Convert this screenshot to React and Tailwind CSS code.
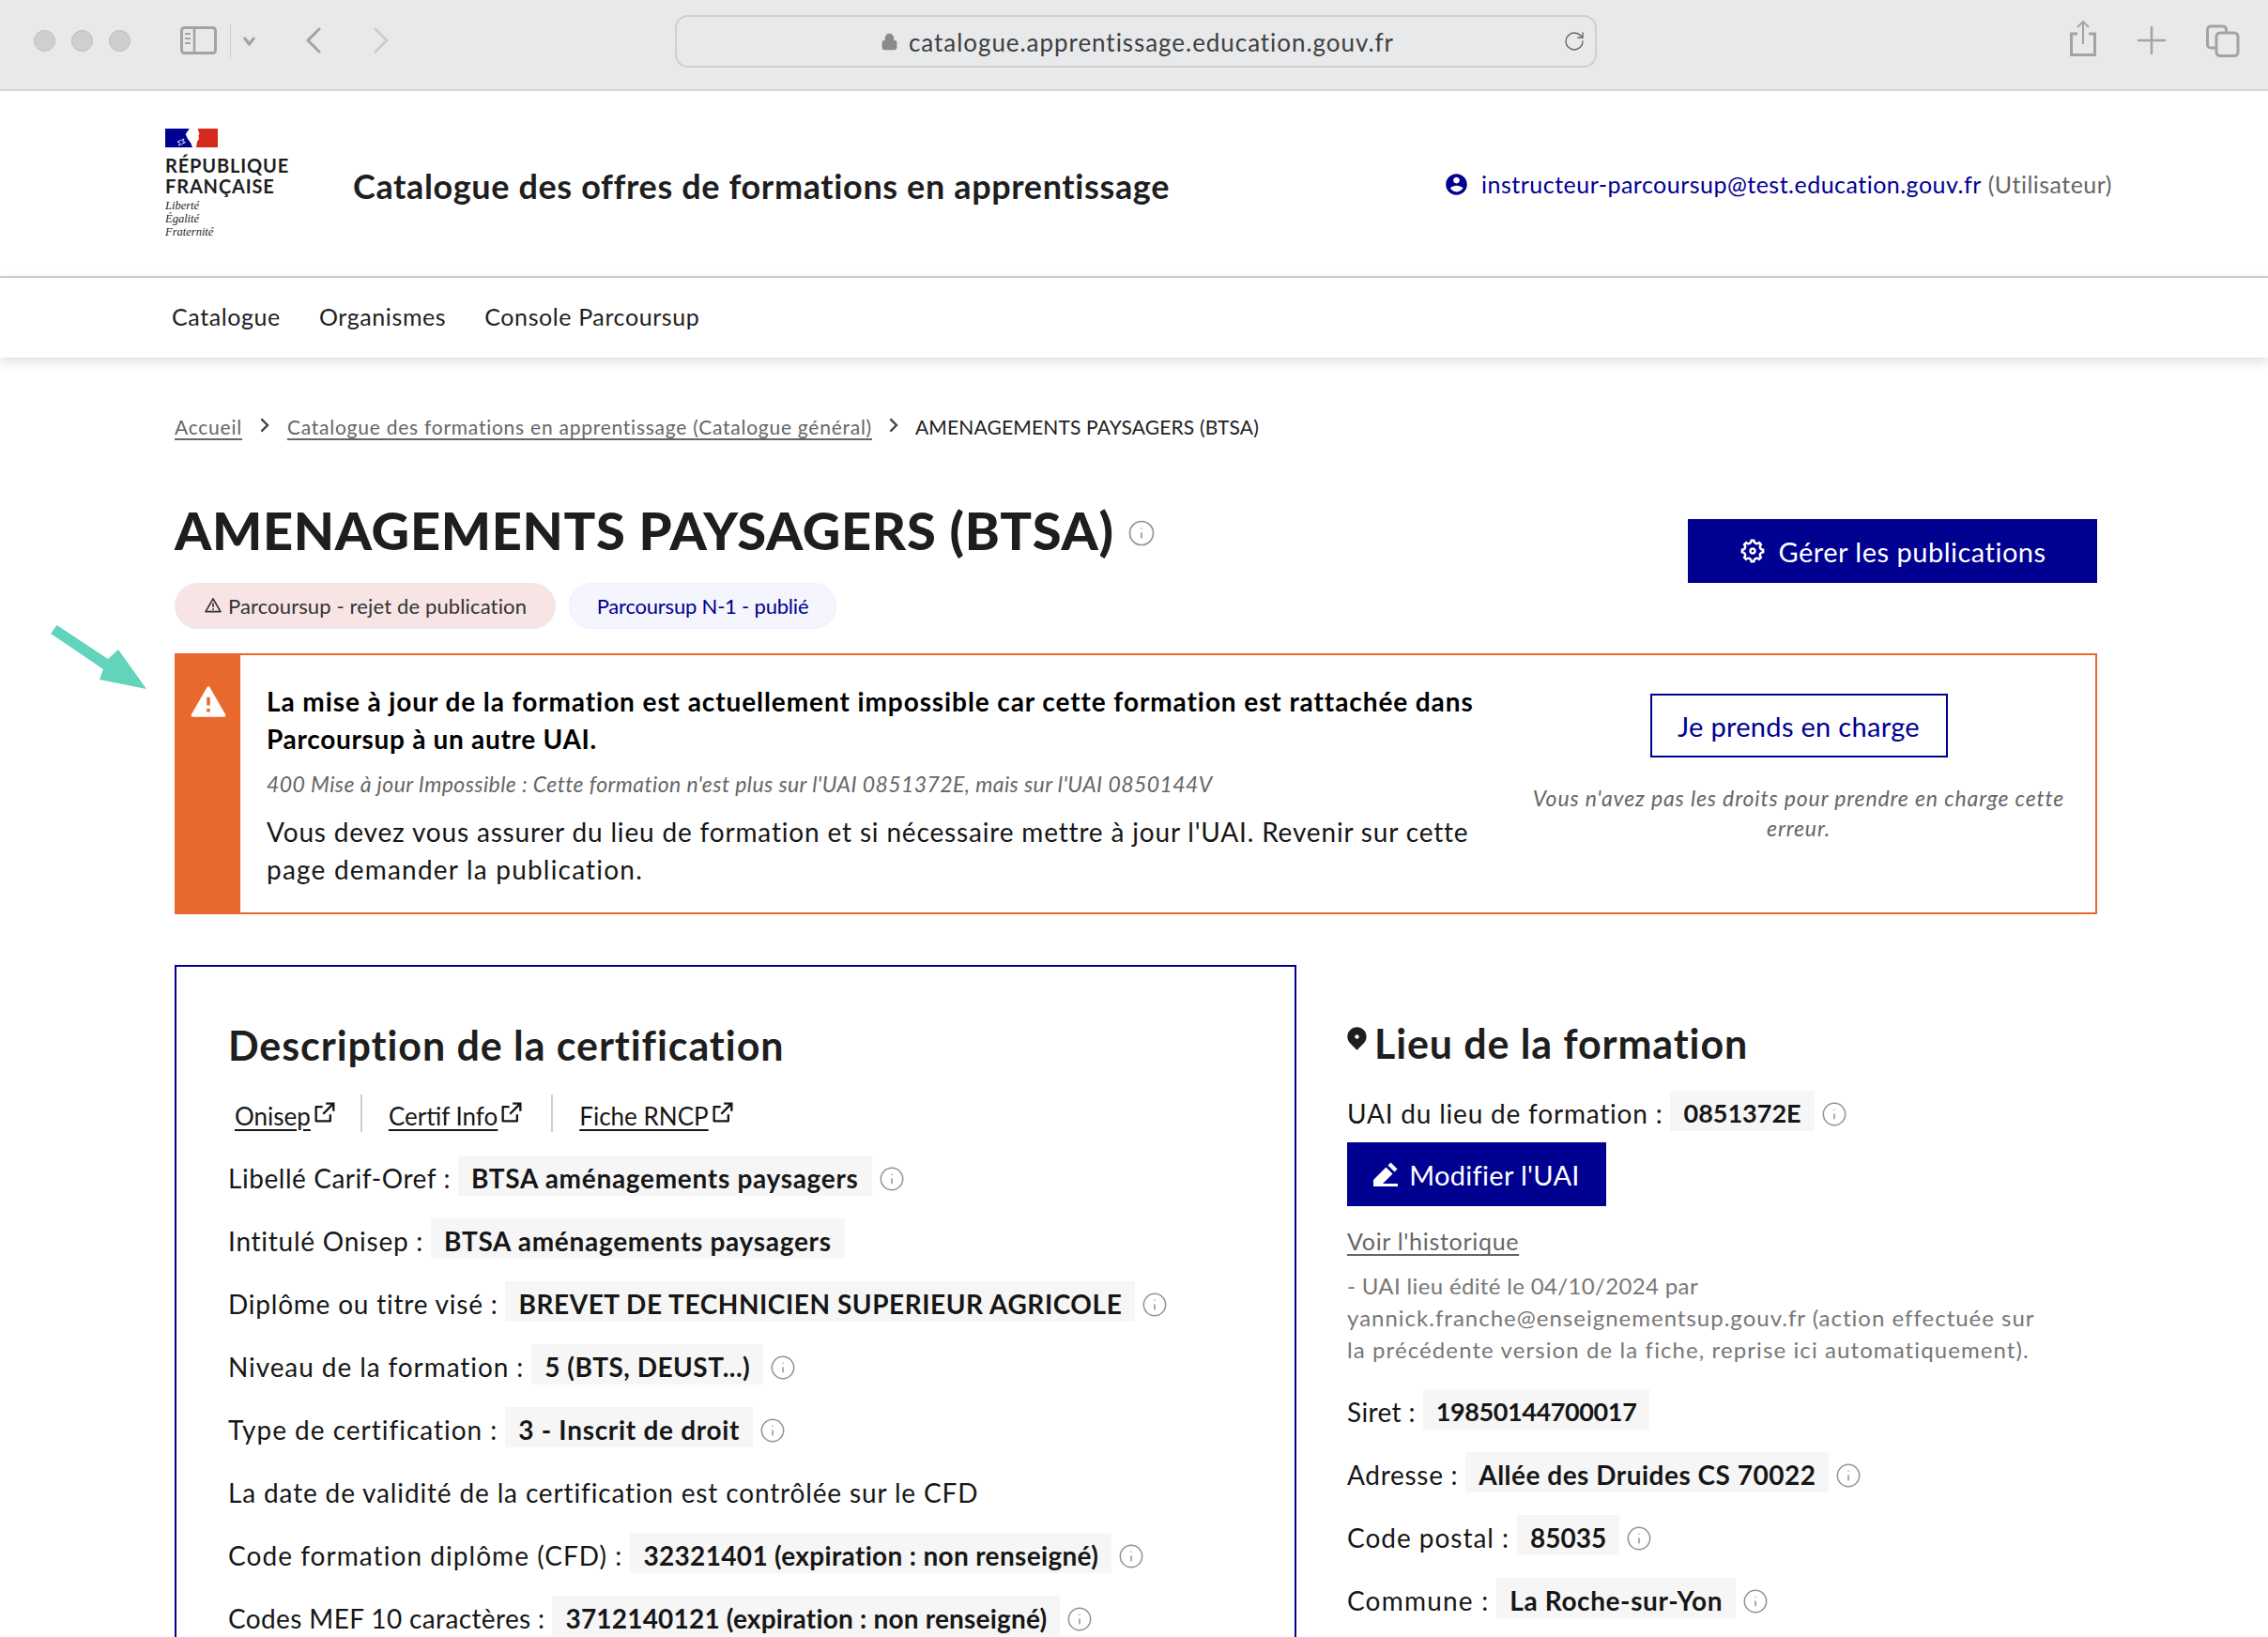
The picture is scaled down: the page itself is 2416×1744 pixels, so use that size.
import { Info, Lock, Plus, RotateCw } from 'lucide-react'
import {
  RiAccountCircleFill,
  RiAlertFill,
  RiAlertLine,
  RiArrowRightSLine,
  RiExternalLinkLine,
  RiMapPin2Fill,
  RiSettings5Line,
} from 'react-icons/ri'

const CERTIF_ROWS = [
  { label: 'Libellé Carif-Oref :', labelClass: 'tracking-[0.55px]', value: 'BTSA aménagements paysagers', info: true },
  { label: 'Intitulé Onisep :', labelClass: 'tracking-[0.75px]', value: 'BTSA aménagements paysagers' },
  { label: 'Diplôme ou titre visé :', labelClass: 'tracking-[0.78px]', value: 'BREVET DE TECHNICIEN SUPERIEUR AGRICOLE', info: true, valueClass: 'tracking-[0.55px]' },
  { label: 'Niveau de la formation :', labelClass: 'tracking-[0.91px]', value: '5 (BTS, DEUST...)', info: true, valueClass: 'tracking-[0.5px]' },
  { label: 'Type de certification :', labelClass: 'tracking-[0.98px]', value: '3 - Inscrit de droit', info: true },
  { label: 'La date de validité de la certification est contrôlée sur le CFD' },
  { label: 'Code formation diplôme (CFD) :', labelClass: 'tracking-[1.05px]', value: '32321401 (expiration : non renseigné)', info: true, valueClass: 'tracking-[0.33px]' },
  { label: 'Codes MEF 10 caractères :', labelClass: 'tracking-[0.37px]', value: '3712140121 (expiration : non renseigné)', info: true, valueClass: 'tracking-[0.2px]' },
]

const LIEU_ROWS = [
  { label: 'Siret :', labelClass: 'tracking-[0.35px]', value: '19850144700017', valueClass: 'text-[27px] tracking-[-0.4px]' },
  { label: 'Adresse :', labelClass: 'tracking-[0.7px]', value: 'Allée des Druides CS 70022', info: true, valueClass: 'tracking-[0.5px]' },
  { label: 'Code postal :', labelClass: 'tracking-[0.97px]', value: '85035', info: true, valueClass: 'tracking-[0px]' },
  { label: 'Commune :', labelClass: 'tracking-[1.2px]', value: 'La Roche-sur-Yon', info: true, valueClass: 'tracking-[0.6px]' },
]

const LINKS = ['Onisep', 'Certif Info', 'Fiche RNCP']

function InfoIcon() {
  return <Info size={28} strokeWidth={1.3} className="ml-[7px] mt-[6px] shrink-0 text-[#929292]" />
}

function Row({ label, labelClass = 'tracking-[0.85px]', value, info, valueClass = 'tracking-[0.7px]' }) {
  return (
    <div className="mb-[24px] flex h-[43px] items-center whitespace-nowrap text-[28px] text-[#161616]">
      <span className={`pt-[5px] ${labelClass}`}>{label}</span>
      {value && (
        <span className={`ml-[8px] flex h-[43px] items-center bg-[#f6f6f6] px-[14px] pt-[5px] font-bold ${valueClass}`}>
          {value}
        </span>
      )}
      {info && <InfoIcon />}
    </div>
  )
}

function BrowserBar() {
  return (
    <div className="flex h-[97px] items-start border-b-2 border-[#d9d9d9] bg-[#e8e9eb] text-[#a3a3a3]">
      <div className="ml-[36px] mt-[32px] flex gap-[17px]">
        <span className="h-[23px] w-[23px] rounded-full border border-[#bcbcbc] bg-[#cfcfcf]" />
        <span className="h-[23px] w-[23px] rounded-full border border-[#bcbcbc] bg-[#cfcfcf]" />
        <span className="h-[23px] w-[23px] rounded-full border border-[#bcbcbc] bg-[#cfcfcf]" />
      </div>
      <svg className="ml-[53px] mt-[28px]" width="39" height="30" viewBox="0 0 39 30" fill="none" stroke="#a3a3a3">
        <rect x="1.500" y="1.500" width="36" height="27" rx="3" strokeWidth="3" />
        <path d="M15 2v26" strokeWidth="2.500" />
        <path d="M5 8h6M5 13h6M5 18h6" strokeWidth="2" />
      </svg>
      <span className="ml-[14px] mt-[26px] h-[36px] w-px bg-[#cfcfcf]" />
      <svg className="ml-[12px] mt-[38px]" width="15" height="12" viewBox="0 0 15 12" fill="none" stroke="#a3a3a3" strokeWidth="3">
        <path d="M2 2l5.500 7L13 2" />
      </svg>
      <svg className="ml-[52px] mt-[29px]" width="18" height="28" viewBox="0 0 18 28" fill="none" stroke="#a3a3a3" strokeWidth="3" strokeLinecap="round">
        <path d="M15 2L3 14l12 12" />
      </svg>
      <svg className="ml-[54px] mt-[29px]" width="18" height="28" viewBox="0 0 18 28" fill="none" stroke="#cdcdcd" strokeWidth="3" strokeLinecap="round">
        <path d="M3 2l12 12L3 26" />
      </svg>
      <div className="ml-[304px] mt-[16px] flex h-[56px] w-[982px] items-center rounded-[14px] border-2 border-[#cfcfcf] pl-[217px] pr-[10px]">
        <Lock size={19} fill="#8a8a8a" strokeWidth={2} className="text-[#8a8a8a]" />
        <span className="ml-[11px] pt-[2px] text-[26px] tracking-[0.95px] text-[#3f3f3f]">catalogue.apprentissage.education.gouv.fr</span>
        <RotateCw size={24} strokeWidth={1.4} className="ml-auto text-[#666666]" />
      </div>
      <svg className="ml-[503px] mt-[22px]" width="30" height="39" viewBox="0 0 30 39" fill="none" stroke="#a3a3a3">
        <path d="M9 14H2.500v22.500h25V14H21" strokeWidth="3" />
        <path d="M15 1v24M9 7l6-6 6 6" strokeWidth="2" />
      </svg>
      <Plus size={48} strokeWidth={1.25} className="ml-[34px] mt-[19px]" />
      <svg className="ml-[34px] mt-[26px]" width="36" height="35" viewBox="0 0 36 35" fill="none" stroke="#a3a3a3" strokeWidth="3">
        <rect x="11" y="9" width="23" height="24.500" rx="4" />
        <path d="M11 25H5a3.500 3.500 0 0 1-3.500-3.500v-16A3.500 3.500 0 0 1 5 2h13a3.500 3.500 0 0 1 3.500 3.500V9" />
      </svg>
    </div>
  )
}

function Logo() {
  return (
    <div className="ml-[176px] w-[200px] pt-[40px]">
      <svg className="block" width="56" height="20" viewBox="0 0 56 20">
        <rect width="30" height="20" fill="#000091" />
        <rect x="30" width="26" height="20" fill="#d52b1e" />
        <path d="M25.700 0L21.700 6 24 11l3 4 2 5h4l1-6 2-3-.5-4 1-1.500-1-2.500-.8-3z" fill="#fff" />
        <path d="M13 14l7-3-1.500 3 3 .5-7 3.500 1-3z" fill="none" stroke="#fff" strokeWidth="0.8" />
      </svg>
      <div className="mt-[8px] text-[20px] font-bold leading-[22px] tracking-[0.85px] text-[#1e1e1e]">
        RÉPUBLIQUE
        <br />
        FRANÇAISE
      </div>
      <div className="mt-[3px] font-['Liberation_Serif',serif] text-[12.5px] italic leading-[14px] text-[#1e1e1e]">
        Liberté
        <br />
        Égalité
        <br />
        Fraternité
      </div>
    </div>
  )
}

export default function App() {
  return (
    <div className="relative h-[1744px] w-[2416px] overflow-hidden bg-white font-['Lato',sans-serif] text-[#161616]">
      <BrowserBar />

      <header className="flex h-[199px] items-start border-b-2 border-[#cecece]">
        <Logo />
        <div className="mt-[79px] whitespace-nowrap text-[36px] font-bold leading-[44px] tracking-[0.62px] text-[#1e1e1e]">
          Catalogue des offres de formations en apprentissage
        </div>
        <div className="ml-auto mr-[166px] mt-[83px] flex items-center text-[25px] leading-[32px] tracking-[0.48px]">
          <RiAccountCircleFill size={27} className="-ml-[2px] text-[#000091]" />
          <span className="ml-[13px] text-[#000091]">instructeur-parcoursup@test.education.gouv.fr</span>
          <span className="ml-[7px] text-[#666666]">(Utilisateur)</span>
        </div>
      </header>

      <nav className="relative flex h-[85px] items-center gap-[41px] pb-[2px] pl-[183px] text-[25px] tracking-[0.6px] text-[#1e1e1e] shadow-[0_4px_12px_rgba(0,0,0,0.14)]">
        <span>Catalogue</span>
        <span>Organismes</span>
        <span>Console Parcoursup</span>
      </nav>

      <main className="pl-[186px] pr-[182px]">
        <div className="mt-[60px] flex h-[28px] items-center whitespace-nowrap text-[21px] text-[#666666]">
          <span className="tracking-[0.77px] underline underline-offset-4">Accueil</span>
          <RiArrowRightSLine size={28} className="mx-[10px] mb-[4px] text-[#444444]" />
          <span className="tracking-[0.75px] underline underline-offset-4">Catalogue des formations en apprentissage (Catalogue général)</span>
          <RiArrowRightSLine size={28} className="mx-[9px] mb-[4px] text-[#444444]" />
          <span className="tracking-[0.16px] text-[#222222]">AMENAGEMENTS PAYSAGERS (BTSA)</span>
        </div>

        <div className="mt-[63px] flex items-start justify-between">
          <div>
            <div className="flex h-[66px] items-center">
              <h1 className="whitespace-nowrap text-[56px] font-black leading-[66px] tracking-[0.7px] text-[#1e1e1e]">AMENAGEMENTS PAYSAGERS (BTSA)</h1>
              <Info size={30} strokeWidth={1.3} className="ml-[14px] mt-[6px] text-[#929292]" />
            </div>
            <div className="mt-[23px] flex gap-[14px] text-[22px]">
              <span className="flex h-[49px] w-[406px] items-center justify-center rounded-[25px] bg-[#f7e5e5] tracking-[0.14px] text-[#333333]">
                <RiAlertLine size={20} className="mb-[2px] mr-[6px]" />
                Parcoursup - rejet de publication
              </span>
              <span className="flex h-[49px] w-[285px] items-center justify-center rounded-[25px] border border-[#eeeeff] bg-[#f5f5fe] tracking-[-0.2px] text-[#000091]">
                Parcoursup N-1 - publié
              </span>
            </div>
          </div>
          <button type="button" className="mt-[21px] flex h-[68px] w-[436px] items-center justify-center bg-[#000091] pt-[2px] text-[29px] tracking-[0.5px] text-white">
            <RiSettings5Line size={30} className="mb-[2px] mr-[12px]" />
            Gérer les publications
          </button>
        </div>

        <div className="mt-[26px] flex h-[278px] border-2 border-[#e9692c]">
          <div className="flex w-[68px] shrink-0 justify-center bg-[#e9692c] pt-[29px]">
            <RiAlertFill size={42} className="text-white" />
          </div>
          <div className="w-[1370px] shrink-0 whitespace-nowrap pl-[28px] pt-[29px]">
            <p className="text-[28px] font-bold leading-[40px] tracking-[0.91px] text-black">
              La mise à jour de la formation est actuellement impossible car cette formation est rattachée dans
              <br />
              <span className="tracking-[0.7px]">Parcoursup à un autre UAI.</span>
            </p>
            <p className="mt-[12px] text-[23px] italic leading-[32px] tracking-[0.41px] text-[#666666]">
              400 Mise à jour Impossible : Cette formation n'est plus sur l'UAI 0851372E, mais sur l'UAI 0850144V
            </p>
            <p className="mt-[15px] text-[28px] leading-[40px] tracking-[0.83px] text-[#161616]">
              Vous devez vous assurer du lieu de formation et si nécessaire mettre à jour l'UAI. Revenir sur cette
              <br />
              <span className="tracking-[1.2px]">page demander la publication.</span>
            </p>
          </div>
          <div className="flex w-[580px] shrink-0 flex-col items-center pt-[41px]">
            <button type="button" className="h-[68px] w-[317px] border-2 border-[#000091] pt-[2px] text-[29px] tracking-[0.3px] text-[#000091]">
              Je prends en charge
            </button>
            <p className="mt-[27px] whitespace-nowrap text-center text-[23px] italic leading-[32px] tracking-[0.87px] text-[#666666]">
              Vous n'avez pas les droits pour prendre en charge cette
              <br />
              erreur.
            </p>
          </div>
        </div>

        <div className="mt-[54px] flex items-start">
          <section className="h-[800px] w-[1195px] shrink-0 border-2 border-[#000091] pl-[55px] pt-[57px]">
            <h2 className="whitespace-nowrap text-[43px] font-bold leading-[54px] tracking-[0.92px] text-[#1e1e1e]">Description de la certification</h2>
            <div className="ml-[7px] mt-[25px] flex h-[40px] items-center text-[26px]">
              {LINKS.map((link, i) => (
                <div key={link} className="flex h-[40px] items-center">
                  {i > 0 && (
                    <span className={`mr-[28px] h-[40px] w-[2px] bg-[#cecece] ${i === 1 ? 'ml-[24px]' : 'ml-[28px]'}`} />
                  )}
                  <span className="pt-[6px] underline underline-offset-4">{link}</span>
                  <RiExternalLinkLine size={28} className="mb-[2px] ml-[1px]" />
                </div>
              ))}
            </div>
            <div className="mt-[25px]">
              {CERTIF_ROWS.map((row) => (
                <Row key={row.label} {...row} />
              ))}
            </div>
          </section>

          <section className="ml-[54px] flex-1 pt-[57px]">
            <h2 className="flex h-[54px] items-start whitespace-nowrap text-[43px] font-bold leading-[54px] tracking-[0.87px] text-[#1e1e1e]">
              <RiMapPin2Fill size={27} className="-ml-[3px] mr-[5px] mt-[7px]" />
              Lieu de la formation
            </h2>
            <div className="mt-[23px] flex h-[43px] items-center whitespace-nowrap text-[28px]">
              <span className="pt-[5px] tracking-[0.8px]">UAI du lieu de formation :</span>
              <span className="ml-[8px] flex h-[43px] items-center bg-[#f6f6f6] px-[14px] pt-[5px] text-[27px] font-bold">0851372E</span>
              <InfoIcon />
            </div>
            <button type="button" className="mt-[12px] flex h-[68px] w-[276px] items-center justify-center bg-[#000091] pt-[2px] text-[29px] tracking-[0.3px] text-white">
              <svg className="mb-[3px] mr-[12px]" width="26" height="26" viewBox="0 0 26 26" fill="#fff">
                <path d="M0 19 13.500 5.500 20.500 12.500 10 23H26V26H0z" />
                <path d="M15.500 3.500 18.500.5 25.500 7.500 22.500 10.500z" />
              </svg>
              Modifier l'UAI
            </button>
            <div className="mt-[23px] text-[25px] leading-[28px] tracking-[0.7px] text-[#666666] underline underline-offset-4">Voir l'historique</div>
            <p className="mt-[17px] whitespace-nowrap text-[24px] leading-[34px] tracking-[1px] text-[#777777]">
              <span className="tracking-[0.35px]">- UAI lieu édité le 04/10/2024 par</span>
              <br />
              yannick.franche@enseignementsup.gouv.fr (action effectuée sur
              <br />
              <span className="tracking-[1.1px]">la précédente version de la fiche, reprise ici automatiquement).</span>
            </p>
            <div className="mt-[25px]">
              {LIEU_ROWS.map((row) => (
                <Row key={row.label} {...row} />
              ))}
            </div>
          </section>
        </div>
      </main>

      {/* annotation arrow over the page */}
      <svg className="absolute left-[50px] top-[660px]" width="112" height="80" viewBox="0 0 112 80">
        <path d="M10.500 6 L65 42 L76 32 L106 74 L56 64 L60 53 L4 15 Z" fill="#62d4bb" />
      </svg>
    </div>
  )
}
